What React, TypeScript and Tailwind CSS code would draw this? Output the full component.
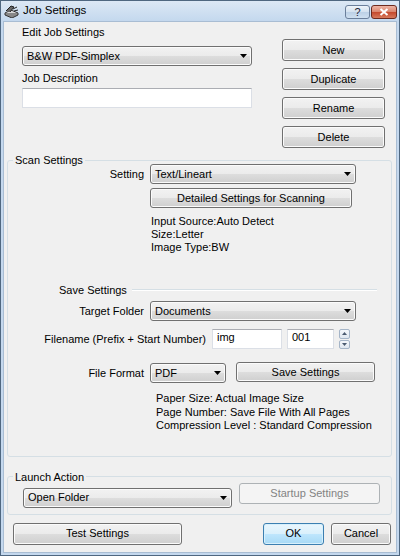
import type { ReactNode } from 'react';

const btnFace =
  'bg-[linear-gradient(to_bottom,#f2f2f2_0%,#ebebeb_50%,#dddddd_51%,#cfcfcf_100%)] border border-[#707070] rounded-[3px] shadow-[inset_0_0_0_1px_#fbfbfb]';

function Button({ className, children }: { className: string; children: ReactNode }) {
  return (
    <div className={`${btnFace} ${className} flex items-center justify-center text-black`}>
      {children}
    </div>
  );
}

function Combo({ className, value }: { className: string; value: string }) {
  return (
    <div className={`${btnFace} ${className} h-[20px] flex items-center justify-between pl-[4px] pr-[4px] rounded-[2px]`}>
      <span>{value}</span>
      <svg width="7" height="4" viewBox="0 0 7 4">
        <path d="M0 0h7L3.5 4z" fill="#000" />
      </svg>
    </div>
  );
}

function TextBox({ className, value }: { className: string; value?: string }) {
  return (
    <div
      className={`${className} h-[20px] bg-white border border-[#dbdfe6] border-t-[#abadb3] flex items-center pl-[4px] pb-[3px]`}
    >
      {value}
    </div>
  );
}

function ScannerIcon() {
  return (
    <svg width="15" height="13" viewBox="0 0 15 13">
      <path d="M1 8l6-3 7 3-6 3z" fill="#d8d8d8" stroke="#333" strokeWidth="1" />
      <path d="M1 8v2l7 3 6-3V8" fill="#888" stroke="#333" strokeWidth="1" />
      <path d="M2 6l5-5 3 1-4 5" fill="#666" stroke="#222" strokeWidth="1" />
      <path d="M9 4l4-2M10 6l4-1" stroke="#222" strokeWidth="1" />
    </svg>
  );
}

export default function App() {
  return (
    <div className="w-[400px] h-[556px] bg-[#c4d8ee] border border-[#4f6780] flex flex-col font-['Liberation_Sans',Arial,sans-serif] text-[11px] text-black">
      {/* title bar */}
      <div className="h-[19px] flex items-center bg-[linear-gradient(to_bottom,#dce8f5,#c5d9ee)]">
        <div className="ml-[3px] mt-[1px]">
          <ScannerIcon />
        </div>
        <span className="ml-[4px] text-[11.5px]">Job Settings</span>
        <div className="ml-auto flex gap-[1px] mr-[2px] mt-[3px]">
          <div className="w-[25px] h-[14px] rounded-[3px] border border-[#6b7f9b] bg-[linear-gradient(to_bottom,#eef4fa_0%,#d3e1ef_50%,#bcd0e6_51%,#cfe0f0_100%)] flex items-center justify-center text-[11px] leading-none text-[#223]">
            ?
          </div>
          <div className="w-[26px] h-[14px] rounded-[3px] border border-[#6e2a1e] bg-[linear-gradient(to_bottom,#eeb4a4_0%,#d9846c_50%,#c4482c_51%,#d7795c_100%)] flex items-center justify-center">
            <svg width="10" height="8" viewBox="0 0 10 8">
              <path d="M1.5 1l7 6M8.5 1l-7 6" stroke="#fff" strokeWidth="2" />
            </svg>
          </div>
        </div>
      </div>

      {/* client area */}
      <div className="mx-[2px] mb-[2px] mt-[1px] flex-1 bg-[#f0f0f0] border border-[#a9bdd3]">
        {/* top: job select + buttons */}
        <div className="flex items-start pl-[18px] mt-[3px]">
          <div className="w-[230px] flex flex-col">
            <div className="leading-[14px]">Edit Job Settings</div>
            <Combo className="mt-[7px] w-[230px]" value="B&W PDF-Simplex" />
            <div className="leading-[14px] mt-[5px]">Job Description</div>
            <TextBox className="mt-[3px] w-[230px]" />
          </div>
          <div className="ml-[30px] mt-[14px] flex flex-col gap-[7px] w-[103px]">
            <Button className="h-[22px]">New</Button>
            <Button className="h-[22px]">Duplicate</Button>
            <Button className="h-[22px]">Rename</Button>
            <Button className="h-[22px]">Delete</Button>
          </div>
        </div>

        {/* Scan Settings */}
        <fieldset className="ml-[3px] mt-[6px] w-[385px] border border-[#d5dfe5] rounded-[3px] pb-[23px]">
          <legend className="ml-[5px] px-[2px] leading-[12px]">Scan Settings</legend>
          <div className="-mt-[2px] flex items-center">
            <div className="w-[136px] text-right">Setting</div>
            <Combo className="ml-[6px] w-[206px]" value="Text/Lineart" />
          </div>
          <Button className="ml-[142px] mt-[4px] w-[202px] h-[20px]">Detailed Settings for Scanning</Button>
          <div className="ml-[143px] mt-[7px] leading-[13px]">
            <div>Input Source:Auto Detect</div>
            <div>Size:Letter</div>
            <div>Image Type:BW</div>
          </div>

          <div className="mt-[29px] ml-[51px] mr-[14px] flex items-center gap-[5px]">
            <span className="leading-[14px]">Save Settings</span>
            <div className="flex-1 h-[2px] border-t border-[#d5dfe5] border-b border-b-white" />
          </div>

          <div className="mt-[4px] flex items-center">
            <div className="w-[136px] text-right">Target Folder</div>
            <Combo className="ml-[6px] w-[206px]" value="Documents" />
          </div>

          <div className="mt-[8px] flex items-center">
            <div className="w-[198px] text-right">Filename (Prefix + Start Number)</div>
            <TextBox className="ml-[6px] w-[70px]" value="img" />
            <TextBox className="ml-[5px] w-[47px]" value="001" />
            <div className="ml-[5px] w-[11px] h-[20px] flex flex-col gap-[1px]">
              <div className="flex-1 rounded-[2px] border border-[#a5b5c8] bg-[linear-gradient(to_bottom,#f4f7fb,#dfe7f0)] flex items-center justify-center">
                <svg width="5" height="3" viewBox="0 0 5 3">
                  <path d="M0 3h5L2.5 0z" fill="#4a5a70" />
                </svg>
              </div>
              <div className="flex-1 rounded-[2px] border border-[#a5b5c8] bg-[linear-gradient(to_bottom,#f4f7fb,#dfe7f0)] flex items-center justify-center">
                <svg width="5" height="3" viewBox="0 0 5 3">
                  <path d="M0 0h5L2.5 3z" fill="#4a5a70" />
                </svg>
              </div>
            </div>
          </div>

          <div className="mt-[14px] flex items-center">
            <div className="w-[136px] text-right">File Format</div>
            <Combo className="ml-[6px] w-[76px]" value="PDF" />
            <Button className="ml-[10px] w-[139px] h-[20px] -mt-[2px]">Save Settings</Button>
          </div>

          <div className="ml-[148px] mt-[9px] leading-[13.5px]">
            <div>Paper Size: Actual Image Size</div>
            <div>Page Number: Save File With All Pages</div>
            <div>Compression Level : Standard Compression</div>
          </div>
        </fieldset>

        {/* Launch Action */}
        <fieldset className="ml-[3px] mt-[14px] w-[385px] border border-[#d5dfe5] rounded-[3px] pb-[6px]">
          <legend className="ml-[5px] px-[2px] leading-[12px]">Launch Action</legend>
          <div className="flex items-start">
            <Combo className="ml-[15px] mt-[5px] w-[209px]" value="Open Folder" />
            <div className="ml-[7px] w-[141px] h-[21px] rounded-[3px] border border-[#adb2b5] bg-[#f4f4f4] text-[#838383] flex items-center justify-center">
              Startup Settings
            </div>
          </div>
        </fieldset>

        {/* bottom buttons */}
        <div className="mt-[8px] ml-[9px] mr-[5px] flex items-center">
          <Button className="w-[169px] h-[22px]">Test Settings</Button>
          <div className="ml-auto w-[61px] h-[22px] rounded-[3px] border border-[#3c7fb1] bg-[linear-gradient(to_bottom,#eaf6fd_0%,#d9f0fc_50%,#bee6fd_51%,#a7d9f5_100%)] shadow-[inset_0_0_0_1px_#d7f0fc] flex items-center justify-center">
            OK
          </div>
          <Button className="ml-[7px] w-[60px] h-[22px]">Cancel</Button>
        </div>
      </div>
    </div>
  );
}
